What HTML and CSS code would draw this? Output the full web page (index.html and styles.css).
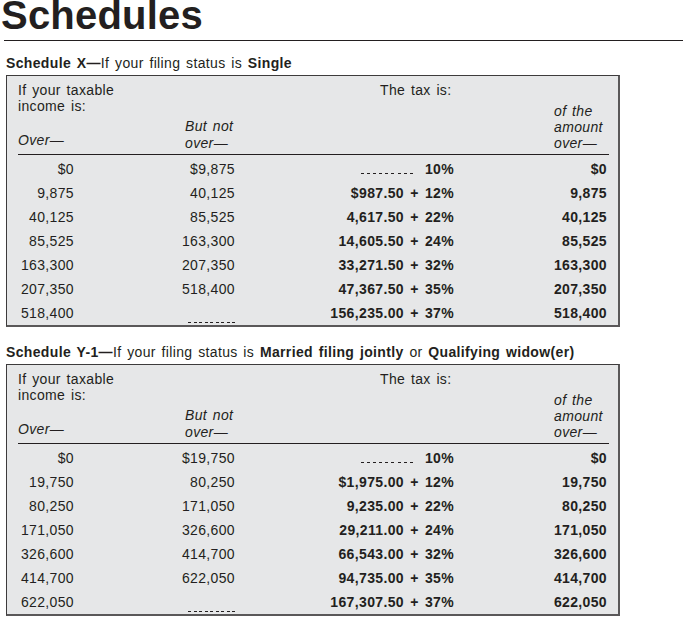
FILE: index.html
```html
<!DOCTYPE html>
<html lang="en">
<head>
<meta charset="utf-8">
<title>Schedules</title>
<link rel="stylesheet" href="styles.css">
</head>
<body>
<div class="page">
  <h1 class="title">Schedules</h1>

  <section class="schedule">
    <h2 class="sched-head"><b>Schedule X—</b>If your filing status is <b>Single</b></h2>
    <div class="box">
      <div class="thead">
        <div class="hc1"><div>If your taxable<br>income is:</div><div class="it">Over—</div></div>
        <div class="hc2 it">But not<br>over—</div>
        <div class="hc3">The tax is:</div>
        <div class="hc4 it">of the<br>amount<br>over—</div>
      </div>
      <div class="tbody">
        <span>$0</span><span>$9,875</span><span class="tax"><i class="lead"></i>10%</span><span class="amt">$0</span>
        <span>9,875</span><span>40,125</span><span class="tax">$987.50 + 12%</span><span class="amt">9,875</span>
        <span>40,125</span><span>85,525</span><span class="tax">4,617.50 + 22%</span><span class="amt">40,125</span>
        <span>85,525</span><span>163,300</span><span class="tax">14,605.50 + 24%</span><span class="amt">85,525</span>
        <span>163,300</span><span>207,350</span><span class="tax">33,271.50 + 32%</span><span class="amt">163,300</span>
        <span>207,350</span><span>518,400</span><span class="tax">47,367.50 + 35%</span><span class="amt">207,350</span>
        <span>518,400</span><span><i class="lead2"></i></span><span class="tax">156,235.00 + 37%</span><span class="amt">518,400</span>
      </div>
    </div>
  </section>

  <section class="schedule">
    <h2 class="sched-head"><b>Schedule Y-1—</b>If your filing status is <b>Married filing jointly</b> or <b>Qualifying widow(er)</b></h2>
    <div class="box">
      <div class="thead">
        <div class="hc1"><div>If your taxable<br>income is:</div><div class="it">Over—</div></div>
        <div class="hc2 it">But not<br>over—</div>
        <div class="hc3">The tax is:</div>
        <div class="hc4 it">of the<br>amount<br>over—</div>
      </div>
      <div class="tbody">
        <span>$0</span><span>$19,750</span><span class="tax"><i class="lead"></i>10%</span><span class="amt">$0</span>
        <span>19,750</span><span>80,250</span><span class="tax">$1,975.00 + 12%</span><span class="amt">19,750</span>
        <span>80,250</span><span>171,050</span><span class="tax">9,235.00 + 22%</span><span class="amt">80,250</span>
        <span>171,050</span><span>326,600</span><span class="tax">29,211.00 + 24%</span><span class="amt">171,050</span>
        <span>326,600</span><span>414,700</span><span class="tax">66,543.00 + 32%</span><span class="amt">326,600</span>
        <span>414,700</span><span>622,050</span><span class="tax">94,735.00 + 35%</span><span class="amt">414,700</span>
        <span>622,050</span><span><i class="lead2"></i></span><span class="tax">167,307.50 + 37%</span><span class="amt">622,050</span>
      </div>
    </div>
  </section>
</div>
</body>
</html>
```

FILE: styles.css
```css
html, body {
  margin: 0;
  padding: 0;
  background: #ffffff;
}

body {
  font-family: "Liberation Sans", Arial, Helvetica, sans-serif;
  color: #231f20;
}

.page {
  width: 683px;
  padding-left: 6px;
  box-sizing: border-box;
  overflow: hidden;
}

.title {
  margin: 0 0 0 -2px;
  height: 40px;
  font-size: 40px;
  line-height: 30px;
  font-weight: bold;
  letter-spacing: 0.2px;
  text-indent: -3px;
  border-bottom: 1px solid #231f20;
}

.schedule {
  margin-top: 14px;
}

.schedule + .schedule {
  margin-top: 17px;
}

.sched-head {
  margin: 0 0 4px 0;
  font-size: 14px;
  line-height: 16px;
  font-weight: normal;
  letter-spacing: 0.35px;
  word-spacing: 1.5px;
  white-space: nowrap;
}

.sched-head b {
  font-weight: bold;
}

.box {
  width: 614px;
  box-sizing: border-box;
  background: #e6e7e8;
  border-top: 1px solid #3d3b3c;
  border-left: 1px solid #3d3b3c;
  border-right: 2px solid #5a5859;
  border-bottom: 2px solid #5a5859;
  font-size: 14px;
  letter-spacing: 0.35px;
  word-spacing: 1.5px;
}

.thead {
  display: flex;
  height: 72px;
  padding-top: 6px;
  margin: 0 9px 0 11px;
  border-bottom: 1px solid #231f20;
  line-height: 16px;
}

.it {
  font-style: italic;
}

.hc1 {
  width: 167px;
  display: flex;
  flex-direction: column;
  justify-content: space-between;
  padding-bottom: 6px;
  white-space: nowrap;
}

.hc2 {
  width: 195px;
  align-self: flex-end;
  line-height: 17px;
  padding-bottom: 2px;
}

.hc3 {
  width: 174px;
  white-space: nowrap;
}

.hc4 {
  flex: 1;
  align-self: flex-end;
  padding-bottom: 3px;
  white-space: nowrap;
}

.tbody {
  display: grid;
  grid-template-columns: 56px 161px 219px 153px;
  grid-auto-rows: 24px;
  line-height: 24px;
  padding: 2px 0 0 11px;
  text-align: right;
  white-space: nowrap;
}

.tax {
  font-weight: bold;
  word-spacing: 2px;
}

.amt {
  font-weight: bold;
}

.lead {
  display: inline-block;
  width: 52px;
  height: 1px;
  margin-right: 12px;
  background: repeating-linear-gradient(to right, #231f20 0 3px, transparent 3px 6.1px);
}

.lead2 {
  display: inline-block;
  width: 47px;
  height: 1px;
  vertical-align: -5px;
  background: repeating-linear-gradient(to right, #231f20 0 3px, transparent 3px 5.5px);
}
```
